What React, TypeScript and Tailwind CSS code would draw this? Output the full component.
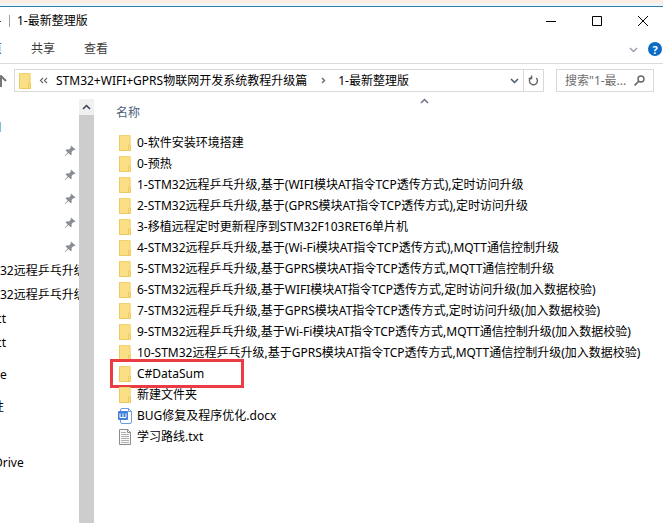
import * as React from "react";

type FileKind = "folder" | "docx" | "txt";

const files: { name: string; kind: FileKind; marked?: boolean }[] = [
  { name: "0-软件安装环境搭建", kind: "folder" },
  { name: "0-预热", kind: "folder" },
  { name: "1-STM32远程乒乓升级,基于(WIFI模块AT指令TCP透传方式),定时访问升级", kind: "folder" },
  { name: "2-STM32远程乒乓升级,基于(GPRS模块AT指令TCP透传方式),定时访问升级", kind: "folder" },
  { name: "3-移植远程定时更新程序到STM32F103RET6单片机", kind: "folder" },
  { name: "4-STM32远程乒乓升级,基于(Wi-Fi模块AT指令TCP透传方式),MQTT通信控制升级", kind: "folder" },
  { name: "5-STM32远程乒乓升级,基于GPRS模块AT指令TCP透传方式,MQTT通信控制升级", kind: "folder" },
  { name: "6-STM32远程乒乓升级,基于WIFI模块AT指令TCP透传方式,定时访问升级(加入数据校验)", kind: "folder" },
  { name: "7-STM32远程乒乓升级,基于GPRS模块AT指令TCP透传方式,定时访问升级(加入数据校验)", kind: "folder" },
  { name: "9-STM32远程乒乓升级,基于Wi-Fi模块AT指令TCP透传方式,MQTT通信控制升级(加入数据校验)", kind: "folder" },
  { name: "10-STM32远程乒乓升级,基于GPRS模块AT指令TCP透传方式,MQTT通信控制升级(加入数据校验)", kind: "folder" },
  { name: "C#DataSum", kind: "folder", marked: true },
  { name: "新建文件夹", kind: "folder" },
  { name: "BUG修复及程序优化.docx", kind: "docx" },
  { name: "学习路线.txt", kind: "txt" },
];

function FolderIcon() {
  return (
    <svg width="14" height="16" viewBox="0 0 14 16" className="shrink-0" aria-hidden="true">
      <path d="M1 0h11.5v10h0.5v6H1z" fill="#fbdf84" />
      <path d="M1.5 0.5h10.5v9" fill="none" stroke="#f3d070" />
      <path d="M1.5 0.5v15h11v-5.5h-2v5.5" fill="none" stroke="#efc95f" />
    </svg>
  );
}

function DocxIcon() {
  return (
    <svg width="14" height="16" viewBox="0 0 14 16" className="shrink-0" aria-hidden="true">
      <path d="M2.5 3V2a1.5 1.5 0 0 1 1.5-1.5h6.5l3 3V14a1.5 1.5 0 0 1-1.5 1.5H4A1.5 1.5 0 0 1 2.5 14z" fill="#fff" stroke="#6b9be0" />
      <path d="M10.5 0.5v3h3" fill="none" stroke="#6b9be0" />
      <rect x="0" y="3" width="10" height="9" rx="1" fill="#4480d8" />
      <path d="M2 5.5v4h6v-4M5 5.5v4" fill="none" stroke="#fff" />
    </svg>
  );
}

function TxtIcon() {
  return (
    <svg width="14" height="16" viewBox="0 0 14 16" className="shrink-0" aria-hidden="true">
      <path d="M1.5 0.5h8l3 3v12h-11z" fill="#fafafa" stroke="#8c8c8c" />
      <path d="M9.5 0.5v3h3" fill="none" stroke="#8c8c8c" />
      <path d="M3 3.5h5M3 5.5h8M3 7.5h8M3 9.5h8M3 11.5h8M3 13.5h8" stroke="#b0b0b0" />
    </svg>
  );
}

function FileIcon({ kind }: { kind: FileKind }) {
  if (kind === "docx") return <DocxIcon />;
  if (kind === "txt") return <TxtIcon />;
  return <FolderIcon />;
}

function PinIcon() {
  return (
    <svg width="12" height="12" viewBox="0 0 12 12" aria-hidden="true">
      <path d="M7 0.5l4.5 4-1 0.8-0.9-0.2-2 2 0.1 2.4-1 0.8-2.2-2.2L1 11.3 0.6 11l3-3.6L1.6 5.2l0.9-1 2.5 0.2 2-2-0.4-1z" fill="#8a8f96" />
    </svg>
  );
}

function Chevron({ dir, className = "" }: { dir: "up" | "down" | "right"; className?: string }) {
  const d = { up: "M1 6l3.5-3.5L8 6", down: "M1 3l3.5 3.5L8 3", right: "M3 2l2.5 2.5L3 7" }[dir];
  return (
    <svg width="9" height="9" viewBox="0 0 9 9" className={className} aria-hidden="true">
      <path d={d} fill="none" stroke="currentColor" strokeWidth="1.5" />
    </svg>
  );
}

function TitleBar() {
  return (
    <header className="flex h-7 items-center overflow-hidden">
      <div className="flex min-w-0 flex-1 items-center">
        <span className="h-px w-px bg-gray-700" />
        <span className="ml-2 h-3 w-px bg-gray-400" />
        <h1 className="ml-[7px] text-black">1-最新整理版</h1>
      </div>
      <button aria-label="最小化" className="grid h-7 w-[46px] place-items-center">
        <svg width="10" height="10" viewBox="0 0 10 10"><path d="M0 5.5h10" stroke="#000" /></svg>
      </button>
      <button aria-label="最大化" className="grid h-7 w-[46px] place-items-center">
        <svg width="10" height="10" viewBox="0 0 10 10"><path d="M0.5 0.5h9v9h-9z" fill="none" stroke="#000" /></svg>
      </button>
      <button aria-label="关闭" className="-mr-[3px] grid h-7 w-[46px] place-items-center">
        <svg width="10" height="10" viewBox="0 0 10 10"><path d="M0 0l10 10M10 0L0 10" stroke="#000" /></svg>
      </button>
    </header>
  );
}

function Ribbon() {
  return (
    <nav className="flex h-[29px] items-center overflow-hidden border-b border-[#dadbdc] text-[#3c3c3c]">
      <button className="-ml-2.5">页</button>
      <button className="ml-[29px]">共享</button>
      <button className="ml-[29px]">查看</button>
      <button aria-label="展开功能区" className="ml-auto text-gray-400"><Chevron dir="down" /></button>
      <button aria-label="帮助" className="ml-2.5 mr-px grid h-3.5 w-3.5 place-items-center rounded-full bg-[#0a6cc4] text-[11px] font-bold text-white">?</button>
    </nav>
  );
}

function AddressBar() {
  return (
    <div className="flex h-[33px] items-center pr-[9px]">
      <button aria-label="上移" className="w-3.5 shrink-0">
        <svg width="7" height="12" viewBox="0 0 7 12"><path d="M1 1v11M-4 6l5-5 5 5" fill="none" stroke="#777" strokeWidth="2" /></svg>
      </button>
      <div className="flex h-[23px] min-w-0 flex-1 items-center border border-[#d9d9d9] pl-[3px] text-black">
        <FolderIcon />
        <button aria-label="上级位置" className="ml-[7px] shrink-0">
          <svg width="9" height="9" viewBox="0 0 9 9">
            <path d="M4 2L1.5 4.5 4 7M8 2L5.5 4.5 8 7" fill="none" stroke="#666" strokeWidth="1.2" />
          </svg>
        </button>
        <button className="ml-2 whitespace-nowrap">STM32+WIFI+GPRS物联网开发系统教程升级篇</button>
        <Chevron dir="right" className="ml-3 shrink-0 text-gray-500" />
        <button className="ml-2.5 whitespace-nowrap">1-最新整理版</button>
        <button aria-label="历史记录" className="ml-auto mr-1 text-gray-600"><Chevron dir="down" /></button>
        <button aria-label="刷新" className="grid h-full w-5 place-items-center border-l border-[#d9d9d9]">
          <svg width="11" height="12" viewBox="0 0 11 12">
            <path d="M3 2.6a4 4 0 1 0 5.2 0.3M3.6 0.5v3h-3" fill="none" stroke="#666" strokeWidth="1.4" />
          </svg>
        </button>
      </div>
      <label className="ml-3 flex h-[23px] w-[98px] shrink-0 items-center border border-[#d9d9d9] px-2">
        <input aria-label="搜索" placeholder={'搜索"1-最...'} className="w-full min-w-0 flex-1 outline-none placeholder:text-[#6d6d6d] placeholder:opacity-100" />
        <svg width="11" height="11" viewBox="0 0 11 11" className="shrink-0">
          <circle cx="7" cy="4" r="3" fill="none" stroke="#666" strokeWidth="1.4" />
          <path d="M5 6L0.6 10.4" stroke="#666" strokeWidth="1.6" />
        </svg>
      </label>
    </div>
  );
}

function Sidebar() {
  return (
    <aside className="flex w-[79px] shrink-0 flex-col overflow-hidden whitespace-nowrap pt-[18px] text-black">
      <div className="flex h-6 items-center"><span className="h-2.5 w-px bg-[#7cc4dc]" /></div>
      {[0, 1, 2, 3, 4].map((i) => (
        <div key={i} className="flex h-6 items-center justify-end pr-[3px]"><PinIcon /></div>
      ))}
      <a href="#a" className="flex h-6 items-center">32远程乒乓升级</a>
      <a href="#b" className="flex h-6 items-center">32远程乒乓升级</a>
      <a href="#c" className="-ml-1 flex h-6 items-center">ct</a>
      <a href="#d" className="-ml-1 flex h-6 items-center">ct</a>
      <a href="#e" className="mt-2 flex h-6 items-center">e</a>
      <a href="#f" className="-ml-2 mt-2 flex h-6 items-center">性</a>
      <a href="#g" className="-ml-1.5 mt-8 flex h-6 items-center">Drive</a>
    </aside>
  );
}

function FileList() {
  return (
    <main className="min-w-0 flex-1">
      <table className="w-full border-collapse text-left">
        <thead>
          <tr className="h-[35px]">
            <th className="p-0 pl-[22px] align-top font-normal text-[#4c607a]">
              <div className="relative pt-2">
                名称
                <Chevron dir="up" className="absolute left-[304px] top-0 text-gray-500" />
              </div>
            </th>
          </tr>
        </thead>
        <tbody>
          {files.map((f) => (
            <tr key={f.name} className="h-[21px]">
              <td className="p-0 pl-6">
                <div className="relative flex h-[21px] items-center gap-[5px] whitespace-nowrap text-black">
                  <FileIcon kind={f.kind} />
                  <span>{f.name}</span>
                  {f.marked && (
                    <span className="absolute -left-2 -top-1 h-[29px] w-[134px] border-3 border-[#ea3c42]" />
                  )}
                </div>
              </td>
            </tr>
          ))}
        </tbody>
      </table>
    </main>
  );
}

export default function App() {
  return (
    <div className="flex min-h-screen flex-col overflow-hidden bg-white font-['Noto_Sans','Noto_Sans_CJK_SC',sans-serif] text-[12px] leading-4">
      <div className="h-[3px] bg-[#fdeee4]" />
      <div className="h-[3px] bg-[#eef8fc]" />
      <div className="h-px bg-[#2f7da8]" />
      <TitleBar />
      <Ribbon />
      <AddressBar />
      <div className="flex flex-1">
        <Sidebar />
        <div className="mt-0.5 flex w-[15px] shrink-0 flex-col bg-[#cdcdcd]">
          <button aria-label="向上滚动" className="grid h-4 place-items-center bg-[#f0f0f0] text-gray-700">
            <Chevron dir="up" />
          </button>
        </div>
        <FileList />
      </div>
    </div>
  );
}
